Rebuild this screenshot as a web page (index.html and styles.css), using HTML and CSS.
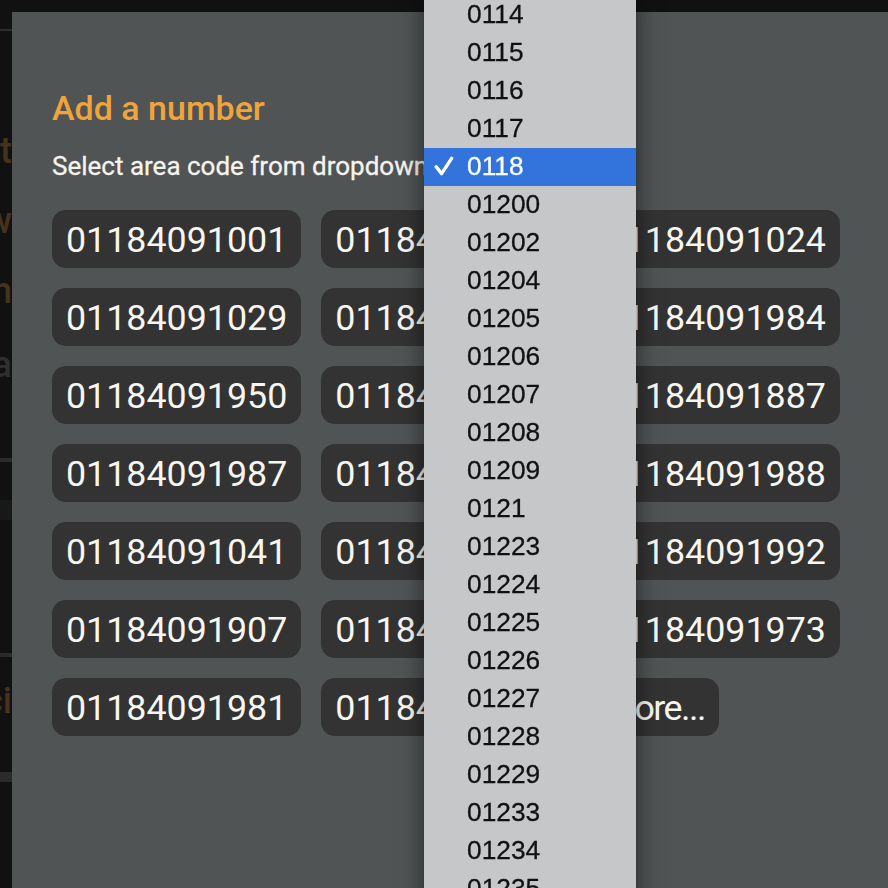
FILE: index.html
```html
<!DOCTYPE html>
<html>
<head>
<meta charset="utf-8">
<link rel="stylesheet" href="styles.css">
</head>
<body>
<div class="page">
  <div class="side">
    <div class="side-head"></div>
    <div class="side-row orange r1"><span>Edit</span></div>
    <div class="side-row orange r2"><span>Show</span></div>
    <div class="side-row orange r3"><span>Switch</span></div>
    <div class="side-row grey r4"><span>Data</span></div>
    <div class="side-rule r5"></div>
    <div class="side-band r6"></div>
    <div class="side-rule r7"></div>
    <div class="side-row orange r8"><span>Numberci</span></div>
    <div class="side-band2 r9"></div>
  </div>
</div>

<div class="modal">
  <h2 class="title">Add a number</h2>
  <p class="subtitle">Select area code from dropdown</p>
  <div class="numbers">
    <div class="num">01184091001</div>
    <div class="num">01184091002</div>
    <div class="num">01184091024</div>
    <div class="num">01184091029</div>
    <div class="num">01184091933</div>
    <div class="num">01184091984</div>
    <div class="num">01184091950</div>
    <div class="num">01184091966</div>
    <div class="num">01184091887</div>
    <div class="num">01184091987</div>
    <div class="num">01184091921</div>
    <div class="num">01184091988</div>
    <div class="num">01184091041</div>
    <div class="num">01184091012</div>
    <div class="num">01184091992</div>
    <div class="num">01184091907</div>
    <div class="num">01184091944</div>
    <div class="num">01184091973</div>
    <div class="num">01184091981</div>
    <div class="num">01184091060</div>
    <div class="num more">More...</div>
  </div>
</div>

<div class="popup">
  <ul class="options">
    <li class="opt"><span class="check"></span>0114</li>
    <li class="opt"><span class="check"></span>0115</li>
    <li class="opt"><span class="check"></span>0116</li>
    <li class="opt"><span class="check"></span>0117</li>
    <li class="opt selected"><span class="check"><svg width="20" height="20" viewBox="0 0 20 20"><path d="M2.2 10.8 L7.6 17.6 L17.6 2.4" fill="none" stroke="#ffffff" stroke-width="3.4" stroke-linecap="round" stroke-linejoin="round"/></svg></span>0118</li>
    <li class="opt"><span class="check"></span>01200</li>
    <li class="opt"><span class="check"></span>01202</li>
    <li class="opt"><span class="check"></span>01204</li>
    <li class="opt"><span class="check"></span>01205</li>
    <li class="opt"><span class="check"></span>01206</li>
    <li class="opt"><span class="check"></span>01207</li>
    <li class="opt"><span class="check"></span>01208</li>
    <li class="opt"><span class="check"></span>01209</li>
    <li class="opt"><span class="check"></span>0121</li>
    <li class="opt"><span class="check"></span>01223</li>
    <li class="opt"><span class="check"></span>01224</li>
    <li class="opt"><span class="check"></span>01225</li>
    <li class="opt"><span class="check"></span>01226</li>
    <li class="opt"><span class="check"></span>01227</li>
    <li class="opt"><span class="check"></span>01228</li>
    <li class="opt"><span class="check"></span>01229</li>
    <li class="opt"><span class="check"></span>01233</li>
    <li class="opt"><span class="check"></span>01234</li>
    <li class="opt"><span class="check"></span>01235</li>
  </ul>
</div>
</body>
</html>
```

FILE: styles.css
```css
html, body {
  margin: 0;
  padding: 0;
  height: 100%;
}

body {
  background: #111111;
  font-family: Roboto, "Open Sans", sans-serif;
  overflow: hidden;
}

.page {
  height: 100%;
}

.side {
  width: 12px;
  overflow: hidden;
  display: flex;
  flex-direction: column;
}

.side-head {
  height: 29px;
  border-bottom: 2px solid #2e2e2e;
  flex: none;
}

.side-row {
  display: flex;
  justify-content: flex-end;
  height: 40px;
  line-height: 40px;
  font-size: 36px;
  font-weight: 500;
  white-space: nowrap;
  flex: none;
}

.orange { color: #45331a; }
.grey { color: #2e2f30; }

.r1 { margin-top: 100px; }
.r2 { margin-top: 30px; }
.r3 { margin-top: 30px; }
.r4 { margin-top: 34px; }

.side-rule {
  height: 4px;
  background: #2a2a2a;
  flex: none;
}
.r5 { margin-top: 73px; }

.side-band {
  height: 20px;
  background: #171919;
  margin-top: 38px;
  flex: none;
}

.r7 { margin-top: 133px; }
.r8 { margin-top: 24px; }

.side-band2 {
  height: 10px;
  background: #2b2b2b;
  margin-top: 51px;
  flex: none;
}

/* modal */
.modal {
  position: fixed;
  top: 12px;
  left: 12px;
  right: 0;
  bottom: 0;
  background: #505455;
  padding: 76px 40px 0 40px;
  box-sizing: border-box;
}

.title {
  margin: 0;
  font-size: 34px;
  line-height: 40px;
  font-weight: 500;
  color: #f0a43a;
}

.subtitle {
  margin: 22px 0 0 0;
  font-size: 26px;
  line-height: 32px;
  font-weight: 400;
  color: #f6f3ec;
  -webkit-text-stroke: 0.3px #f6f3ec;
}

.numbers {
  margin-top: 28px;
  display: flex;
  flex-wrap: wrap;
  gap: 20px;
  width: 796px;
}

.num {
  height: 58px;
  line-height: 58px;
  padding: 1px 14px 0 14px;
  border-radius: 14px;
  background: #333333;
  color: #f8f6f0;
  font-size: 35.8px;
  font-weight: 400;
  box-sizing: border-box;
}

.num.more {
  letter-spacing: -1.5px;
}

/* native select popup */
.popup {
  position: fixed;
  top: -4px;
  left: 424px;
  width: 212px;
  bottom: -40px;
  background: #c6c7c9;
  box-shadow: 0 0 22px rgba(0, 0, 0, 0.55);
  overflow: hidden;
}

.options {
  list-style: none;
  margin: 0;
  padding: 0;
}

.opt {
  display: flex;
  align-items: center;
  height: 38px;
  line-height: 36px;
  padding-bottom: 2px;
  box-sizing: border-box;
  font-family: "Liberation Sans", Arial, sans-serif;
  font-size: 26.3px;
  color: #111111;
  -webkit-text-stroke: 0.3px #111111;
}

.opt.selected {
  background: #3273dc;
  color: #ffffff;
  -webkit-text-stroke: 0.3px #ffffff;
}

.check {
  width: 43px;
  flex: none;
  display: flex;
  align-items: center;
  padding-left: 10px;
  box-sizing: border-box;
  height: 36px;
}

.check svg {
  display: block;
}
```
